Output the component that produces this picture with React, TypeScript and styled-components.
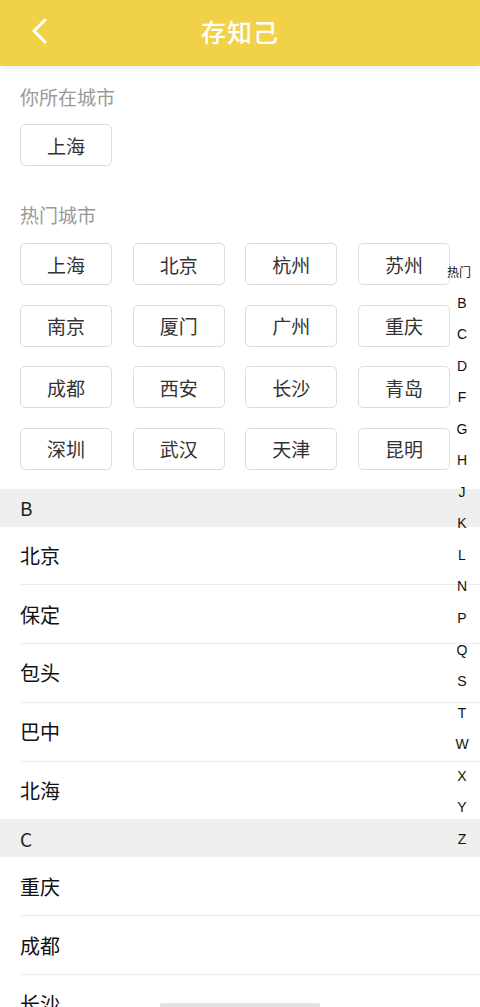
import * as React from 'react';
import styled, { createGlobalStyle } from 'styled-components';

const GlobalStyle = createGlobalStyle`
    html, body {
        margin: 0;
        padding: 0;
        background: #fff;
        font-family: "Noto Sans CJK SC", "Noto Sans", sans-serif;
        overflow: hidden;
    }
`;

const Page = styled.div`
    position: relative;
    width: 480px;
    height: 1007px;
    overflow: hidden;
    background: #fff;
`;

const Header = styled.div`
    position: relative;
    z-index: 2;
    height: 66px;
    background: #f1d148;
    display: flex;
    align-items: center;
    justify-content: center;
    box-shadow: 0 2px 6px rgba(0, 0, 0, 0.08);
`;

const BackButton = styled.div`
    position: absolute;
    left: 22px;
    top: 12px;
    width: 36px;
    height: 36px;
    display: flex;
    align-items: center;
    justify-content: center;
`;

const Title = styled.div`
    color: #fff;
    font-size: 25px;
    font-weight: 500;
    letter-spacing: 1px;
    margin-top: -4px;
`;

const Top = styled.div`
    padding: 0 30px 19px 20px;
`;

interface LabelProps {
    first?: boolean;
}
const Label = styled.div<LabelProps>`
    height: 30px;
    line-height: 30px;
    font-size: 19px;
    color: #999;
    margin-top: ${(props) => (props.first ? '16px' : '34px')};
    margin-bottom: ${(props) => (props.first ? '12px' : '13px')};
`;

const CityGrid = styled.div`
    display: grid;
    grid-template-columns: repeat(4, 92px);
    justify-content: space-between;
    row-gap: 19.5px;
`;

const CityButton = styled.div`
    width: 92px;
    height: 42px;
    box-sizing: border-box;
    border: 1px solid #dcdcdc;
    border-radius: 5px;
    display: flex;
    align-items: center;
    justify-content: center;
    font-size: 19px;
    color: #333;
`;

const GroupHeader = styled.div`
    height: 38px;
    background: #efefef;
    display: flex;
    align-items: center;
    padding-left: 20px;
    font-size: 19px;
    color: #222;
`;

const CityRow = styled.div`
    margin-left: 20px;
    height: 57.8px;
    display: flex;
    align-items: center;
    font-size: 20px;
    color: #111;
    & + & {
        border-top: 1px solid #ececec;
    }
`;

const IndexBar = styled.div`
    position: absolute;
    right: 0;
    top: 256px;
    width: 36px;
    display: flex;
    flex-direction: column;
    align-items: center;
    z-index: 3;
`;

interface IndexProps {
    small?: boolean;
}
const IndexItem = styled.div<IndexProps>`
    height: 31.56px;
    line-height: 31.56px;
    font-family: ${(props) =>
        props.small ? '"Noto Sans CJK SC", sans-serif' : '"Liberation Sans", Arial, sans-serif'};
    font-size: ${(props) => (props.small ? '12px' : '14px')};
    margin-right: ${(props) => (props.small ? '6px' : '0')};
    color: #111;
`;

const HomeBar = styled.div`
    position: absolute;
    left: 160px;
    bottom: 0;
    width: 160px;
    height: 4px;
    border-radius: 2px 2px 0 0;
    background: #e2e2e2;
    z-index: 3;
`;

const hotCities = [
    '上海', '北京', '杭州', '苏州',
    '南京', '厦门', '广州', '重庆',
    '成都', '西安', '长沙', '青岛',
    '深圳', '武汉', '天津', '昆明',
];

const groups = [
    { letter: 'B', cities: ['北京', '保定', '包头', '巴中', '北海'] },
    { letter: 'C', cities: ['重庆', '成都', '长沙', '常州', '长春'] },
];

const letters = ['B', 'C', 'D', 'F', 'G', 'H', 'J', 'K', 'L', 'N', 'P', 'Q', 'S', 'T', 'W', 'X', 'Y', 'Z'];

const App: React.FC = () => {
    return (
        <Page>
            <GlobalStyle />
            <Header>
                <BackButton>
                    <svg width="20" height="30" viewBox="0 0 20 30">
                        <path d="M15 5 L4 16 L15 27" fill="none" stroke="#fff" strokeWidth="3" strokeLinecap="round" strokeLinejoin="round" />
                    </svg>
                </BackButton>
                <Title>存知己</Title>
            </Header>
            <Top>
                <Label first>你所在城市</Label>
                <CityButton>上海</CityButton>
                <Label>热门城市</Label>
                <CityGrid>
                    {hotCities.map((name, i) => (
                        <CityButton key={i}>{name}</CityButton>
                    ))}
                </CityGrid>
            </Top>
            {groups.map((group) => (
                <div key={group.letter}>
                    <GroupHeader>{group.letter}</GroupHeader>
                    {group.cities.map((name) => (
                        <CityRow key={name}>{name}</CityRow>
                    ))}
                </div>
            ))}
            <IndexBar>
                <IndexItem small>热门</IndexItem>
                {letters.map((l) => (
                    <IndexItem key={l}>{l}</IndexItem>
                ))}
            </IndexBar>
            <HomeBar />
        </Page>
    );
};

export default App;
